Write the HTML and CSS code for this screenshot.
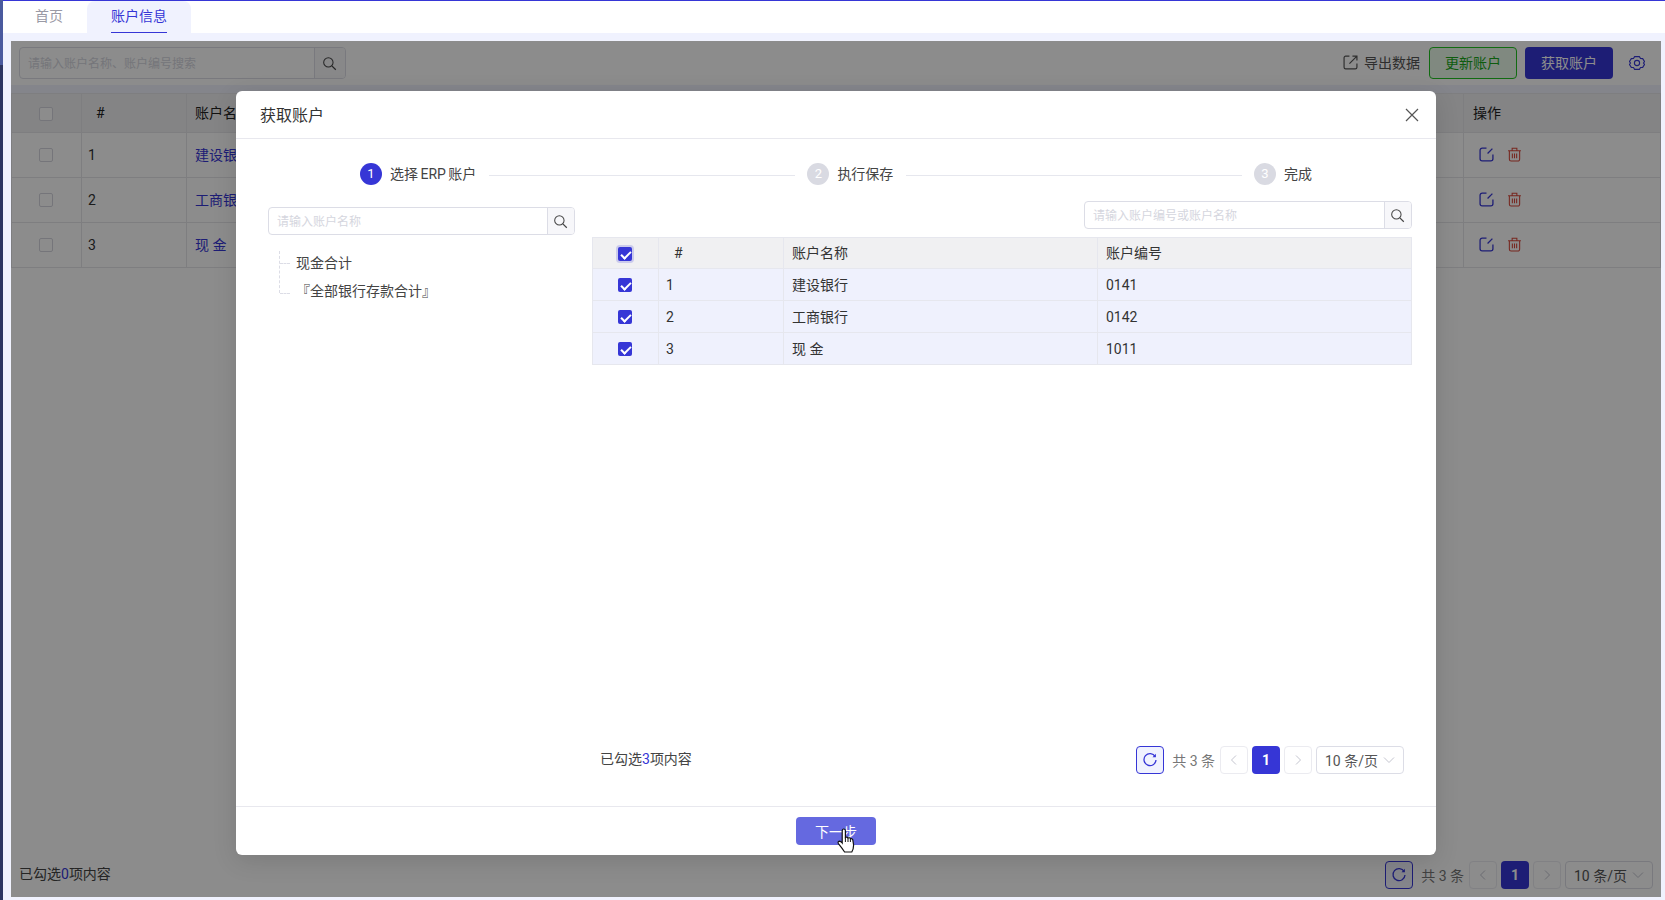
FILE: index.html
```html
<!DOCTYPE html>
<html lang="zh-CN">
<head>
    <meta charset="UTF-8">
    <meta name="viewport" content="width=device-width, initial-scale=1.0">
    <title>账户信息</title>
    <link rel="stylesheet" href="styles.css">
</head>
<body>
    <svg class="icon-defs" width="0" height="0">
        <symbol id="i-search" viewBox="0 0 16 16">
            <circle cx="6.8" cy="6.8" r="5" fill="none" stroke="currentColor" stroke-width="1.1"/>
            <path d="M10.5 10.5l4.2 4.2" fill="none" stroke="currentColor" stroke-width="1.3"/>
        </symbol>
        <symbol id="i-refresh" viewBox="0 0 16 16">
            <path d="M13.2 4.6A6 6 0 1 0 14 8" fill="none" stroke="currentColor" stroke-width="1.3"/>
            <path d="M13.9 1.8v3.4h-3.4z" fill="currentColor"/>
        </symbol>
        <symbol id="i-left" viewBox="0 0 12 12">
            <path d="M8 1.5L3.5 6 8 10.5" fill="none" stroke="currentColor"/>
        </symbol>
        <symbol id="i-right" viewBox="0 0 12 12">
            <path d="M4 1.5L8.5 6 4 10.5" fill="none" stroke="currentColor"/>
        </symbol>
        <symbol id="i-down" viewBox="0 0 12 12">
            <path d="M1 3.5L6 8.5 11 3.5" fill="none" stroke="currentColor"/>
        </symbol>
        <symbol id="i-edit" viewBox="0 0 14 14">
            <path d="M7 1H3a2 2 0 0 0-2 2v8a2 2 0 0 0 2 2h8a2 2 0 0 0 2-2V7" fill="none" stroke="currentColor" stroke-width="1.2"/>
            <path d="M8 6L12.5 1.5" fill="none" stroke="currentColor" stroke-width="1.2"/>
        </symbol>
        <symbol id="i-trash" viewBox="0 0 14 14">
            <path d="M1 3.5h12M4.8 3.3V1.2h4.4v2.1M2.2 3.5v8a1.6 1.6 0 0 0 1.6 1.6h6.4a1.6 1.6 0 0 0 1.6-1.6v-8M5 6v4.6M7 6v4.6M9 6v4.6" fill="none" stroke="currentColor" stroke-width="1"/>
        </symbol>
    </svg>

    <div class="app">
        <div class="side-bar"></div>
        <div class="main">
            <div class="tabs">
                <div class="tab">首页</div>
                <div class="tab active"><span>账户信息</span></div>
            </div>
            <div class="page">
                <div class="panel">
                    <div class="toolbar">
                        <div class="search search-lg">
                            <input type="text" placeholder="请输入账户名称、账户编号搜索">
                            <button class="search-btn"><svg class="icon-15"><use href="#i-search"/></svg></button>
                        </div>
                        <div class="toolbar-right">
                            <a class="export">
                                <svg class="icon-15" viewBox="0 0 14 14">
                                    <path d="M6 1H2.5A1.5 1.5 0 0 0 1 2.5v9A1.5 1.5 0 0 0 2.5 13h9a1.5 1.5 0 0 0 1.5-1.5V8" fill="none" stroke="currentColor" stroke-width="1.1"/>
                                    <path d="M6 8l7-7M8.8 1H13v4.2" fill="none" stroke="currentColor" stroke-width="1.1"/>
                                </svg>
                                导出数据
                            </a>
                            <button class="btn btn-green">更新账户</button>
                            <button class="btn btn-primary">获取账户</button>
                            <svg class="gear" viewBox="0 0 16 16">
                                <path d="M5.6 1.6h4.8l1.1 1.9 2.2.1 1.9 3-1.2 1.4 1.2 1.4-1.9 3-2.2.1-1.1 1.9H5.6l-1.1-1.9-2.2-.1-1.9-3L1.6 8 .4 6.6l1.9-3 2.2-.1z" fill="none" stroke="currentColor" stroke-width="1.1" stroke-linejoin="round"/>
                                <circle cx="8" cy="8" r="2.6" fill="none" stroke="currentColor" stroke-width="1.1"/>
                            </svg>
                        </div>
                    </div>
                    <div class="band"></div>
                    <table class="main-table">
                        <colgroup>
                            <col class="c-check"><col class="c-num"><col><col class="c-ops">
                        </colgroup>
                        <thead>
                            <tr>
                                <th class="center"><span class="check"></span></th>
                                <th class="th-num">#</th>
                                <th>账户名称</th>
                                <th class="th-ops">操作</th>
                            </tr>
                        </thead>
                        <tbody>
                            <tr>
                                <td class="center"><span class="check"></span></td>
                                <td class="td-num">1</td>
                                <td class="link">建设银行</td>
                                <td class="ops">
                                    <svg class="icon-15 blue"><use href="#i-edit"/></svg>
                                    <svg class="icon-15 red"><use href="#i-trash"/></svg>
                                </td>
                            </tr>
                            <tr>
                                <td class="center"><span class="check"></span></td>
                                <td class="td-num">2</td>
                                <td class="link">工商银行</td>
                                <td class="ops">
                                    <svg class="icon-15 blue"><use href="#i-edit"/></svg>
                                    <svg class="icon-15 red"><use href="#i-trash"/></svg>
                                </td>
                            </tr>
                            <tr>
                                <td class="center"><span class="check"></span></td>
                                <td class="td-num">3</td>
                                <td class="link">现 金</td>
                                <td class="ops">
                                    <svg class="icon-15 blue"><use href="#i-edit"/></svg>
                                    <svg class="icon-15 red"><use href="#i-trash"/></svg>
                                </td>
                            </tr>
                        </tbody>
                    </table>
                    <div class="panel-foot">
                        <div class="picked">已勾选<em>0</em>项内容</div>
                        <div class="pager">
                            <button class="pg-refresh"><svg class="icon-16"><use href="#i-refresh"/></svg></button>
                            <span class="pg-total">共 3 条</span>
                            <button class="pg-btn"><svg class="icon-12"><use href="#i-left"/></svg></button>
                            <button class="pg-btn current">1</button>
                            <button class="pg-btn"><svg class="icon-12"><use href="#i-right"/></svg></button>
                            <div class="pg-size">10 条/页<svg class="icon-12"><use href="#i-down"/></svg></div>
                        </div>
                    </div>

                    <div class="mask">
                        <div class="modal">
                            <div class="modal-head">
                                <span class="modal-title">获取账户</span>
                                <svg class="modal-close" viewBox="0 0 14 14">
                                    <path d="M1 1l12 12M13 1L1 13" fill="none" stroke="currentColor" stroke-width="1.2"/>
                                </svg>
                            </div>
                            <div class="modal-body">
                                <div class="steps">
                                    <span class="step-dot on">1</span>
                                    <span class="step-text">选择 ERP 账户</span>
                                    <span class="step-line first"></span>
                                    <span class="step-dot">2</span>
                                    <span class="step-text">执行保存</span>
                                    <span class="step-line"></span>
                                    <span class="step-dot">3</span>
                                    <span class="step-text">完成</span>
                                </div>
                                <div class="columns">
                                    <div class="col-tree">
                                        <div class="search">
                                            <input type="text" placeholder="请输入账户名称">
                                            <button class="search-btn"><svg class="icon-15"><use href="#i-search"/></svg></button>
                                        </div>
                                        <ul class="tree">
                                            <li>现金合计</li>
                                            <li>『全部银行存款合计』</li>
                                        </ul>
                                    </div>
                                    <div class="col-list">
                                        <div class="search search-right">
                                            <input type="text" placeholder="请输入账户编号或账户名称">
                                            <button class="search-btn"><svg class="icon-15"><use href="#i-search"/></svg></button>
                                        </div>
                                        <table class="pick-table">
                                            <colgroup>
                                                <col class="p-check"><col class="p-num"><col class="p-name"><col>
                                            </colgroup>
                                            <thead>
                                                <tr>
                                                    <th class="center"><span class="check checked focus"></span></th>
                                                    <th class="th-num">#</th>
                                                    <th>账户名称</th>
                                                    <th>账户编号</th>
                                                </tr>
                                            </thead>
                                            <tbody>
                                                <tr>
                                                    <td class="center"><span class="check checked"></span></td>
                                                    <td class="td-num">1</td>
                                                    <td class="td-name">建设银行</td>
                                                    <td>0141</td>
                                                </tr>
                                                <tr>
                                                    <td class="center"><span class="check checked"></span></td>
                                                    <td class="td-num">2</td>
                                                    <td class="td-name">工商银行</td>
                                                    <td>0142</td>
                                                </tr>
                                                <tr>
                                                    <td class="center"><span class="check checked"></span></td>
                                                    <td class="td-num">3</td>
                                                    <td class="td-name">现 金</td>
                                                    <td>1011</td>
                                                </tr>
                                            </tbody>
                                        </table>
                                        <div class="list-foot">
                                            <div class="picked">已勾选<em>3</em>项内容</div>
                                            <div class="pager">
                                                <button class="pg-refresh"><svg class="icon-16"><use href="#i-refresh"/></svg></button>
                                                <span class="pg-total">共 3 条</span>
                                                <button class="pg-btn"><svg class="icon-12"><use href="#i-left"/></svg></button>
                                                <button class="pg-btn current">1</button>
                                                <button class="pg-btn"><svg class="icon-12"><use href="#i-right"/></svg></button>
                                                <div class="pg-size">10 条/页<svg class="icon-12"><use href="#i-down"/></svg></div>
                                            </div>
                                        </div>
                                    </div>
                                </div>
                            </div>
                            <div class="modal-foot">
                                <button class="btn-next">下一步</button>
                                <svg class="hand" viewBox="0 0 18 25">
                                    <path d="M5.2 15V3Q5.2 1 6.8 1T8.4 3V9.5Q10.2 8.6 11 10Q12.8 9.2 13.4 10.8Q15.2 10.2 15.8 11.8L16.6 17Q16.6 21 14.8 24H7.6Q5 20 1.4 15.6Q.4 13.6 2.4 13.2Q3.8 13.2 5.2 15Z" fill="#fff" stroke="#111" stroke-width="1.2"/>
                                    <path d="M8.4 9.5V14M11 10V14M13.4 10.8V14" fill="none" stroke="#111"/>
                                </svg>
                            </div>
                        </div>
                    </div>
                </div>
            </div>
        </div>
    </div>
</body>
</html>
```

FILE: styles.css
```css
* {
    box-sizing: border-box;
}

html, body {
    margin: 0;
    height: 100%;
    overflow: hidden;
}

body {
    font-family: Roboto, "Noto Sans CJK SC", sans-serif;
    font-size: 14px;
    color: #333;
    background: #f0f2fe;
}

button, input {
    font-family: inherit;
}

.icon-defs {
    position: absolute;
}

.icon-12 { width: 12px; height: 12px; }
.icon-15 { width: 15px; height: 15px; }
.icon-16 { width: 16px; height: 16px; }

.app {
    display: flex;
    height: 900px;
}

.side-bar {
    width: 3px;
    flex: none;
    background: linear-gradient(#4a5a9e 65px, #2c3562 65px);
}

.main {
    flex: 1;
    display: flex;
    flex-direction: column;
    min-width: 0;
}

/* tabs */
.tabs {
    display: flex;
    height: 33px;
    padding-left: 8px;
    background: #fff;
    border-top: 1px solid #3636d6;
}

.tab {
    padding: 0 24px;
    line-height: 30px;
    color: #9a9aa5;
}

.tab.active {
    background: #f0f2fe;
    border-radius: 8px 8px 0 0;
    color: #3636d6;
}

.tab.active span {
    display: block;
    height: 32px;
    border-bottom: 1px solid #3636d6;
}

.page {
    flex: 1;
    display: flex;
    padding: 8px 4px 3px 8px;
    min-height: 0;
}

.panel {
    position: relative;
    flex: 1;
    display: flex;
    flex-direction: column;
    background: #fff;
    min-width: 0;
}

/* toolbar */
.toolbar {
    display: flex;
    justify-content: space-between;
    height: 44px;
    padding: 6px 7px 6px 8px;
}

.toolbar-right {
    display: flex;
    align-items: center;
}

.search {
    display: flex;
    height: 28px;
    background: #fff;
    border: 1px solid #dcdde6;
    border-radius: 4px;
}

.search input {
    flex: 1;
    min-width: 0;
    border: none;
    outline: none;
    background: transparent;
    padding: 2px 8px 0;
    font-size: 12px;
}

.search input::placeholder {
    color: #d5d6de;
}

.search-btn {
    width: 27px;
    padding: 0 2px 0 0;
    display: flex;
    align-items: center;
    justify-content: center;
    border: none;
    border-left: 1px solid #dcdde6;
    border-radius: 0 3px 3px 0;
    background: #f7f7fa;
    color: #444;
}

.search-lg {
    width: 327px;
    height: 32px;
}

.search-lg .search-btn {
    width: 31px;
}

.search-right {
    width: 328px;
    margin-left: auto;
}

.export {
    display: flex;
    align-items: center;
    gap: 6px;
    padding-bottom: 2px;
    color: #555;
    margin-right: 9px;
}

.btn {
    width: 88px;
    height: 32px;
    border-radius: 4px;
    font-size: 14px;
    padding: 0 0 2px;
}

.btn-green {
    border: 1px solid #1fc41f;
    background: #eaf9ea;
    color: #1aa81a;
    margin-right: 8px;
}

.btn-primary {
    border: none;
    background: #3636d6;
    color: #fff;
}

.gear {
    width: 16px;
    height: 16px;
    margin: 0 9px 0 16px;
    color: #3636d6;
}

.band {
    height: 8px;
    background: #f0f2fe;
}

/* tables */
table {
    width: 100%;
    border-collapse: collapse;
    table-layout: fixed;
}

th {
    font-weight: 400;
    text-align: left;
}

.center {
    text-align: center;
}

.check {
    display: inline-block;
    width: 14px;
    height: 14px;
    vertical-align: middle;
    border: 1px solid #d5d6de;
    border-radius: 2px;
    background: #fff;
}

.check.checked {
    position: relative;
    border: none;
    background: #3636d6;
}

.check.checked::after {
    content: "";
    position: absolute;
    left: 5px;
    top: 2px;
    width: 4px;
    height: 8px;
    border: solid #fff;
    border-width: 0 2px 2px 0;
    transform: rotate(45deg);
}

.check.focus {
    box-shadow: 0 0 0 2px rgba(54, 54, 214, 0.2);
}

.main-table th, .main-table td {
    border: 1px solid #e5e5e9;
    padding: 0 9px 2px 8px;
    overflow: hidden;
    white-space: nowrap;
}

.main-table th {
    height: 39px;
    background: #f0f0f2;
    color: #222;
}

.main-table td {
    height: 45px;
}

.c-check { width: 70px; }
.c-num { width: 105px; }
.c-ops { width: 197px; }

.main-table .center {
    padding-right: 10px;
}

.main-table th.center {
    padding-bottom: 0;
}

.main-table .th-num {
    padding: 0 9px 1px 14px;
}

.main-table .th-ops {
    padding-left: 9px;
}

.main-table .td-num {
    padding: 0 9px 1px 6px;
}

.link {
    color: #3636d6;
}

.main-table .ops {
    padding: 0 0 2px 15px;
}

.ops svg {
    vertical-align: middle;
    margin-right: 10px;
}

.blue { color: #3636d6; }
.red { color: #d9483b; }

.panel-foot {
    margin-top: auto;
    display: flex;
    align-items: center;
    justify-content: space-between;
    padding: 0 8px 8px;
}

.picked {
    padding-bottom: 4px;
    color: #444;
}

.picked em {
    font-style: normal;
    color: #3636d6;
}

/* pagination */
.pager {
    display: flex;
    align-items: center;
    gap: 4px;
}

.pager button {
    width: 28px;
    height: 28px;
    padding: 0;
    display: flex;
    align-items: center;
    justify-content: center;
    border-radius: 4px;
    font-size: 14px;
}

.pg-refresh {
    border: 1px solid #3636d6;
    background: #f0f2fe;
    color: #3636d6;
}

.pg-total {
    margin: 0 1px 0 4px;
    padding-bottom: 1px;
    color: #777;
}

.pg-btn {
    border: 1px solid #ebebf0;
    background: #fff;
    color: #c4c5cf;
}

.pg-btn.current {
    border: none;
    background: #3636d6;
    color: #fff;
    font-weight: 700;
}

.pg-size {
    width: 88px;
    height: 28px;
    display: flex;
    align-items: center;
    justify-content: center;
    gap: 5px;
    padding-bottom: 1px;
    border: 1px solid #dcdde6;
    border-radius: 4px;
    color: #555;
}

.pg-size svg {
    color: #c4c5cf;
}

/* modal */
.mask {
    position: absolute;
    inset: 0;
    display: flex;
    justify-content: center;
    padding-top: 50px;
    background: rgba(0, 0, 0, 0.45);
}

.modal {
    width: 1200px;
    height: 764px;
    display: flex;
    flex-direction: column;
    background: #fff;
    border-radius: 6px;
    box-shadow: 0 6px 24px rgba(0, 0, 0, 0.12);
}

.modal-head {
    height: 48px;
    flex: none;
    display: flex;
    align-items: center;
    justify-content: space-between;
    padding: 0 17px 0 24px;
    border-bottom: 1px solid #e8e8ee;
}

.modal-title {
    padding-bottom: 2px;
    font-size: 16px;
    color: #333;
}

.modal-close {
    width: 14px;
    height: 14px;
    color: #555;
}

.modal-body {
    flex: 1;
    min-height: 0;
    display: flex;
    flex-direction: column;
    padding: 24px 24px 0 32px;
}

.steps {
    display: flex;
    align-items: center;
    height: 22px;
    padding-left: 92px;
    padding-right: 100px;
}

.step-dot {
    width: 22px;
    height: 22px;
    flex: none;
    border-radius: 50%;
    background: #d9dae2;
    color: #fff;
    font-size: 13px;
    text-align: center;
    line-height: 22px;
}

.step-dot.on {
    background: #3636d6;
}

.step-text {
    margin-left: 8px;
    padding-bottom: 3px;
    word-spacing: -1px;
    color: #444;
    white-space: nowrap;
}

.step-line {
    flex: 1;
    height: 1px;
    margin: 2px 12px 0 13px;
    background: #e6e7ee;
}

.step-line.first {
    flex: none;
    width: 306px;
}

.columns {
    flex: 1;
    min-height: 0;
    display: flex;
    gap: 17px;
    margin-top: 16px;
}

.col-tree {
    width: 307px;
    flex: none;
    padding-top: 6px;
}

.tree {
    list-style: none;
    margin: 16px 0 0 11px;
    padding: 0 0 0 16px;
    height: 42px;
    border-left: 1px dashed #dcdde6;
    color: #444;
}

.tree li {
    position: relative;
    height: 28px;
    line-height: 24px;
}

.tree li::before {
    content: "";
    position: absolute;
    left: -16px;
    top: 12px;
    width: 10px;
    border-top: 1px dashed #dcdde6;
}

.tree li + li::before {
    top: 14px;
}

.col-list {
    flex: 1;
    min-width: 0;
    display: flex;
    flex-direction: column;
}

.pick-table {
    margin-top: 8px;
}

.pick-table th, .pick-table td {
    height: 32px;
    padding: 0 8px 2px;
    border: 1px solid #e6e7ee;
}

.pick-table th {
    height: 31px;
    background: #f0f0f2;
}

.pick-table td {
    background: #eff1fd;
}

.pick-table .center {
    padding-right: 10px;
}

.pick-table th.center {
    padding-bottom: 1px;
}

.pick-table .th-num {
    padding: 0 8px 1px 15px;
}

.pick-table .td-num {
    padding: 0 8px 0 7px;
}

.pick-table td.center, .pick-table .td-name {
    padding-bottom: 2px;
}

.pick-table td:last-child {
    padding-bottom: 0;
}

.p-check { width: 66px; }
.p-num { width: 125px; }
.p-name { width: 314px; }

.list-foot {
    margin-top: auto;
    margin-bottom: 32px;
    display: flex;
    align-items: center;
    justify-content: space-between;
    padding: 0 8px;
}

.modal-foot {
    position: relative;
    height: 49px;
    flex: none;
    display: flex;
    justify-content: center;
    padding-top: 10px;
    border-top: 1px solid #e8e8ee;
}

.btn-next {
    width: 80px;
    height: 28px;
    padding: 0;
    border: none;
    border-radius: 4px;
    background: #6569e0;
    color: #fff;
    font-size: 14px;
}

.hand {
    position: absolute;
    left: 601px;
    top: 21px;
    width: 18px;
    height: 25px;
}
```
